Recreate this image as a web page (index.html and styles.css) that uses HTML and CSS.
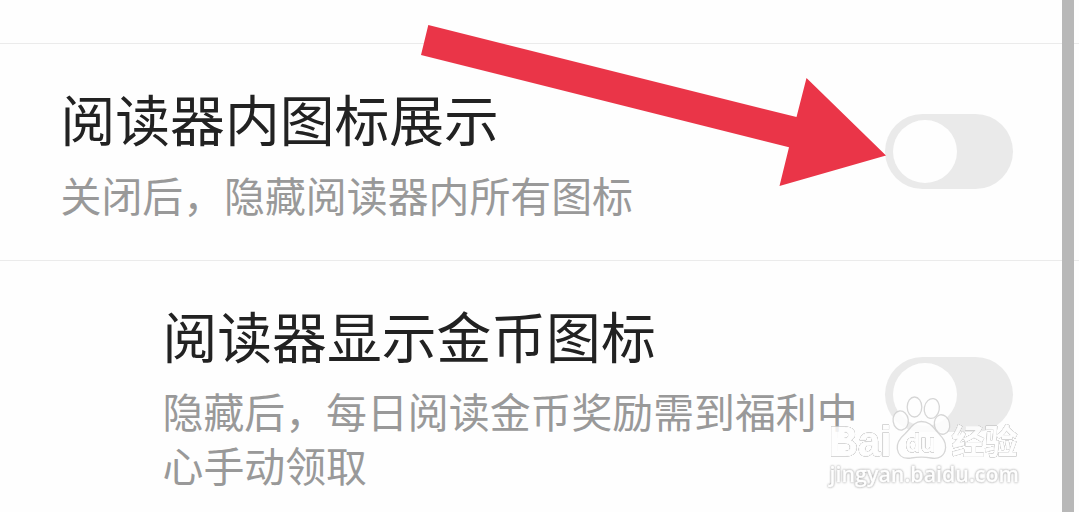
FILE: index.html
```html
<!DOCTYPE html>
<html lang="zh-CN">
<head>
<meta charset="utf-8">
<title>阅读设置</title>
<link rel="stylesheet" href="styles.css">
</head>
<body>
<main class="settings">
  <div class="previous-row"></div>
  <section class="row row-main">
    <div class="copy">
      <h2 class="title">阅读器内图标展示</h2>
      <p class="description">关闭后，隐藏阅读器内所有图标</p>
    </div>
    <div class="toggle"><span class="knob"></span></div>
  </section>
  <section class="row row-child">
    <div class="copy">
      <h2 class="title">阅读器显示金币图标</h2>
      <p class="description">隐藏后，每日阅读金币奖励需到福利中<br>心手动领取</p>
    </div>
    <div class="toggle"><span class="knob"></span></div>
  </section>
  <div class="scrollbar"></div>
  <svg class="overlay" viewBox="0 0 1079 512">
    <path class="arrow" d="M428.3 25 796.5 117 806.5 78 886 155.5 779.5 186 789 147.2 421 55Z"/>
    <g class="watermark">
      <g class="paw">
        <ellipse cx="900.7" cy="420.5" rx="7.6" ry="9.6" transform="rotate(-8 900.7 420.5)"/>
        <ellipse cx="914.5" cy="407" rx="7.3" ry="10"/>
        <ellipse cx="931.8" cy="408.5" rx="7.5" ry="10" transform="rotate(10 931.8 408.5)"/>
        <ellipse cx="942" cy="424.5" rx="7.6" ry="9.8" transform="rotate(-12 942 424.5)"/>
        <path d="M921.3 421.5C914 421.5 910 429 905 433.8C899 439 896.5 443 897.3 449C898.5 456.5 904 459 911 458C918 456.8 925 456.8 931 458C939 459.5 945 456 945.6 447.5C946 440 941 436.5 936.5 431C931.5 425 928.5 421.5 921.3 421.5Z"/>
      </g>
      <text class="brand" x="829" y="456" textLength="62.5" lengthAdjust="spacingAndGlyphs">Bai</text>
      <text class="brand-du" x="905.5" y="451.5" textLength="30" lengthAdjust="spacingAndGlyphs">du</text>
      <text class="brand-cn" x="951.5" y="454" textLength="66" lengthAdjust="spacingAndGlyphs">经验</text>
      <text class="address" x="829.5" y="482" textLength="189.5" lengthAdjust="spacingAndGlyphs">jingyan.baidu.com</text>
    </g>
  </svg>
</main>
</body>
</html>
```
FILE: styles.css
```css
* { box-sizing: border-box; }

body {
  margin: 0;
  background: #fefefe;
  font-family: "Noto Sans CJK SC", sans-serif;
}

.settings {
  position: relative;
  width: 1079px;
  height: 512px;
  overflow: hidden;
}

.previous-row {
  height: 44px;
  border-bottom: 1px solid #ebebeb;
}

.row {
  display: flex;
  justify-content: space-between;
  align-items: flex-start;
  padding-right: 66px;
}

.row-main {
  height: 217px;
  padding-top: 38px;
  padding-left: 60.5px;
  border-bottom: 1px solid #ebebeb;
}

.row-child {
  padding-top: 38px;
  padding-left: 162.5px;
}

.title {
  margin: 0;
  color: #222;
  font-size: 54.8px;
  font-weight: 400;
  line-height: 70px;
  white-space: nowrap;
}

.description {
  margin: 15px 0 0;
  color: #999;
  font-size: 40.9px;
  font-weight: 400;
  line-height: 54px;
  white-space: nowrap;
}

.row-main .description { margin-top: 16px; }

.toggle {
  flex: none;
  width: 128px;
  height: 75px;
  margin-top: 31.5px;
  padding: 6px 8px;
  border-radius: 38px;
  background: #eaeaea;
}

.row-child .toggle { margin-top: 58px; }

.knob {
  display: block;
  width: 64px;
  height: 63px;
  border-radius: 50%;
  background: #fefefe;
}

.scrollbar {
  position: absolute;
  top: 0;
  left: 1062px;
  width: 12px;
  height: 100%;
  background: #b8b8b8;
}

.overlay {
  position: absolute;
  top: 0;
  left: 0;
  width: 1079px;
  height: 512px;
}

.arrow { fill: #ea3548; }

.watermark {
  fill: #fefefe;
  stroke: #fefefe;
  stroke-width: 1;
  stroke-linejoin: round;
  opacity: .85;
}

.paw {
  stroke: #d0d0d0;
  stroke-width: 1.3;
}

.brand,
.brand-du,
.brand-cn {
  filter: drop-shadow(0 0 .7px #777) drop-shadow(0 0 .5px #bbb);
}

.brand {
  font: 700 42px "Liberation Sans", sans-serif;
}

.brand-du {
  font: 600 26px "Open Sans", sans-serif;
}

.brand-cn {
  font: 700 34px "Noto Sans CJK SC", sans-serif;
  stroke-width: .6;
}

.address {
  font: 600 22px "Open Sans", sans-serif;
  stroke-width: .3;
  filter: drop-shadow(0 0 .8px #777);
}
```
